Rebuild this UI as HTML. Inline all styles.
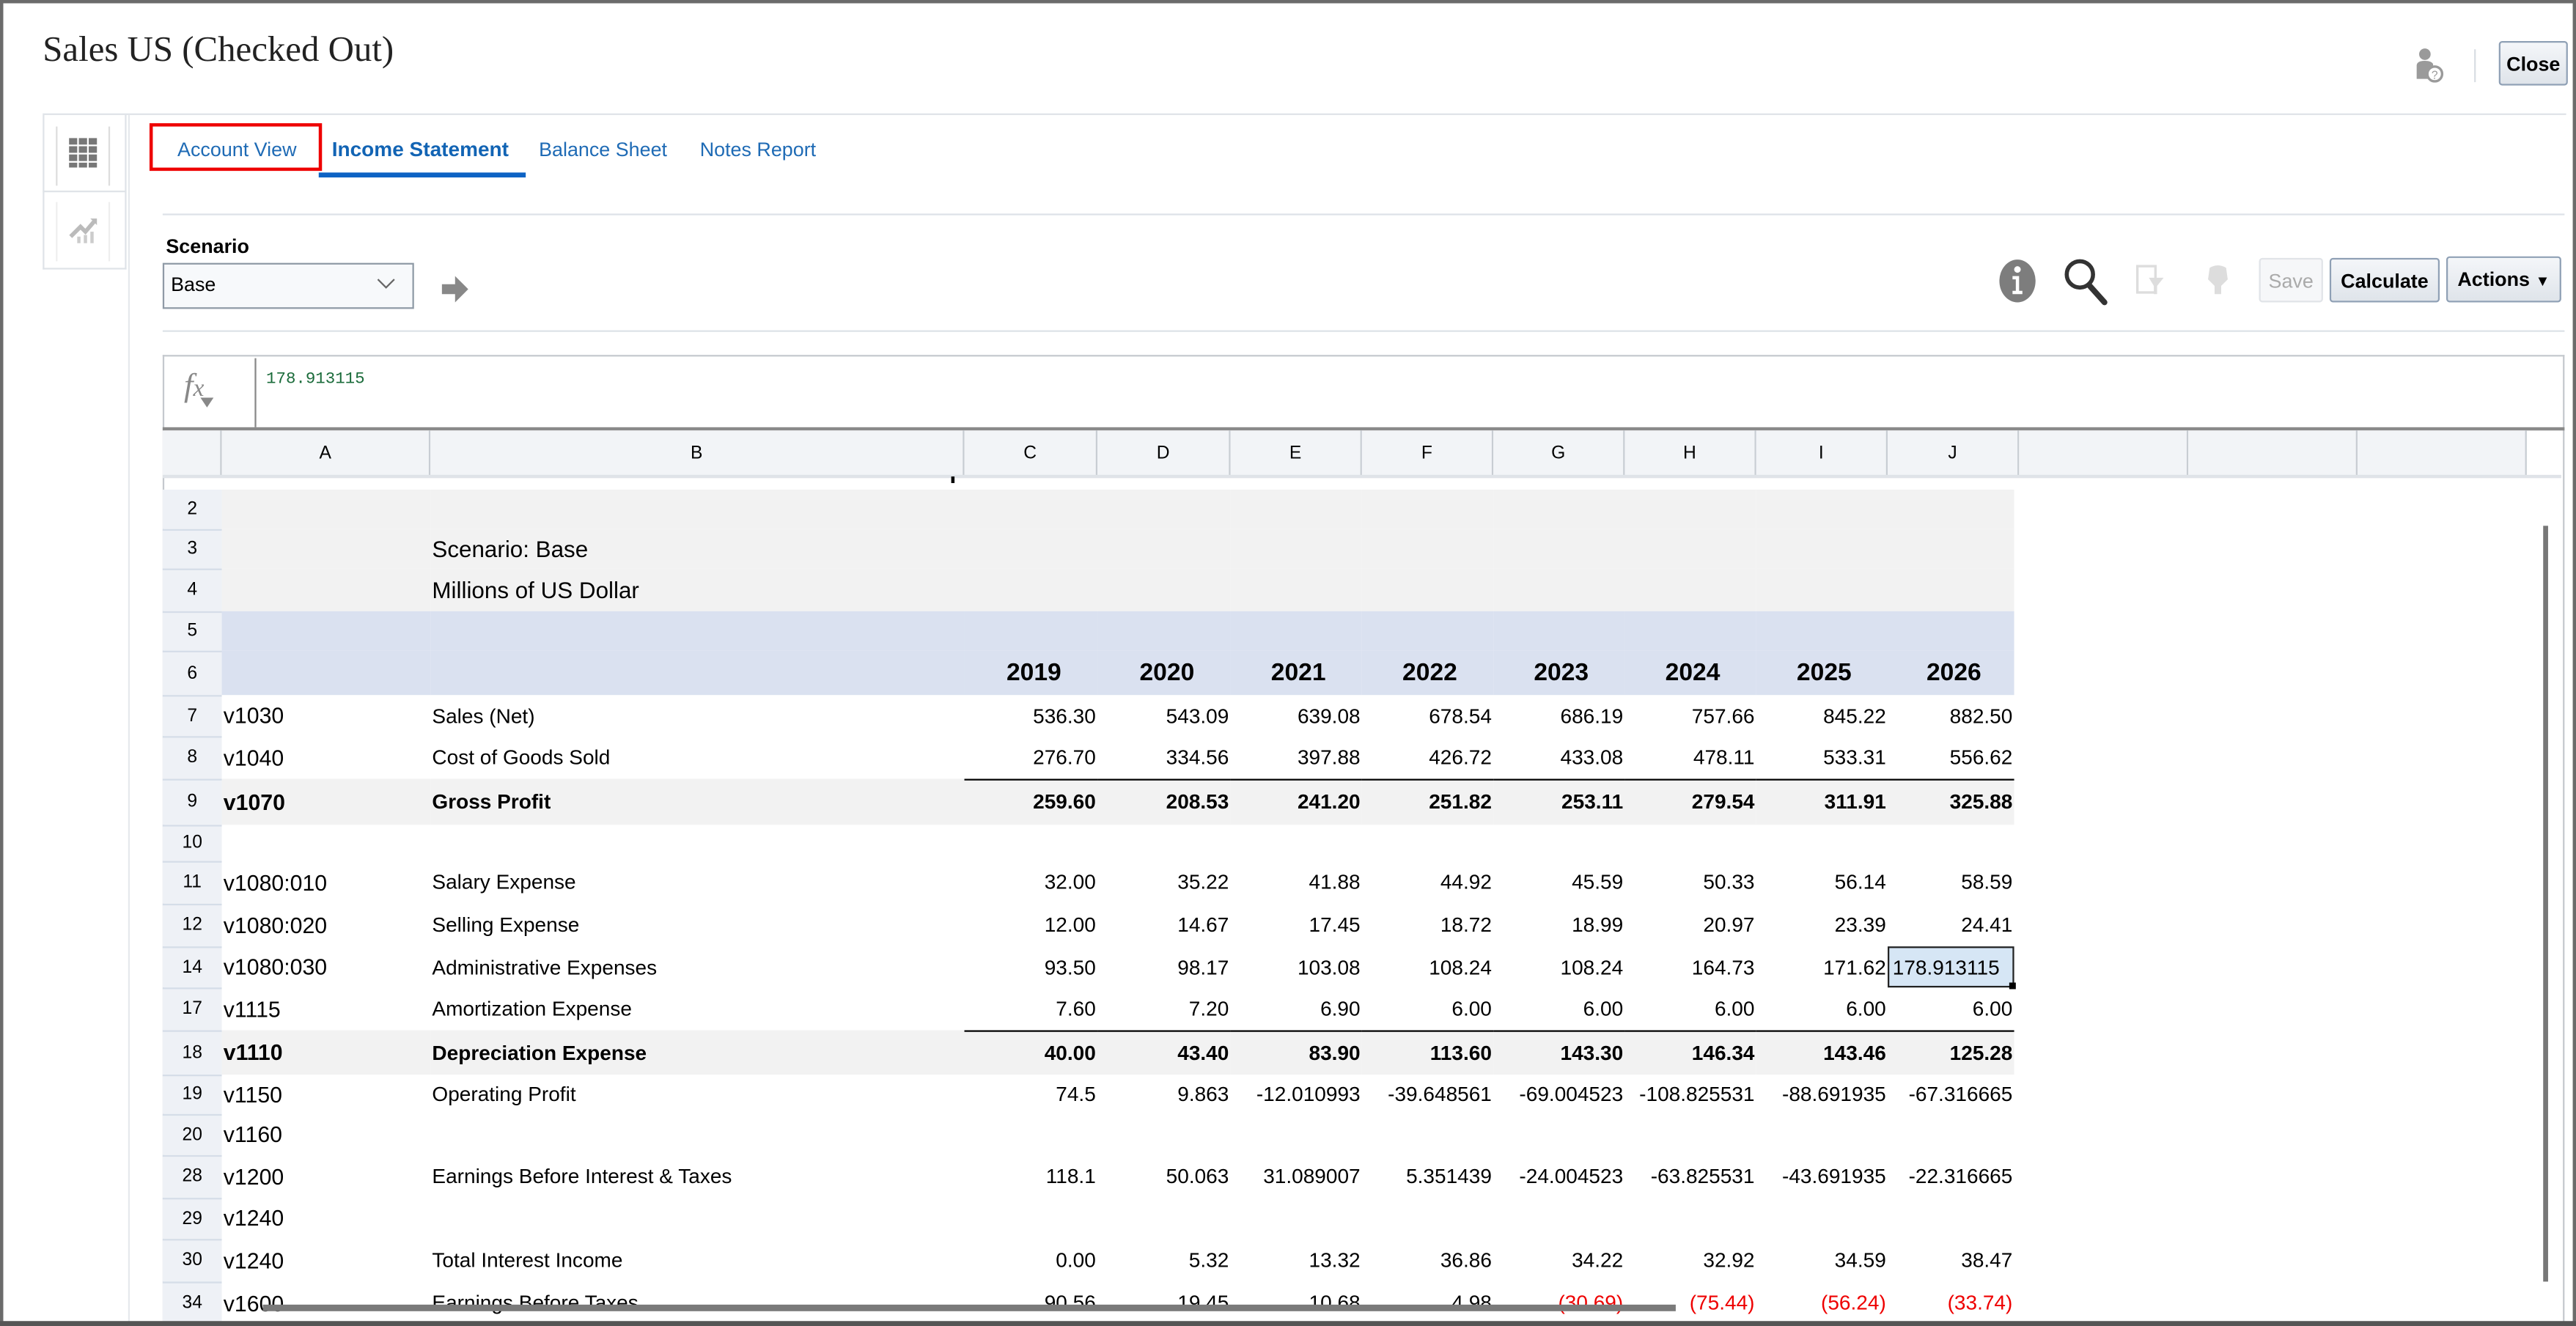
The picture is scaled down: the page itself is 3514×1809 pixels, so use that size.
<!DOCTYPE html>
<html><head><meta charset="utf-8"><style>
html,body{margin:0;padding:0;width:3514px;height:1809px;overflow:hidden;background:#fff}
#w{position:absolute;left:0;top:0;width:1568px;height:807px;transform:scale(2.2411,2.2416);transform-origin:0 0;font-family:"Liberation Sans",Arial,sans-serif;color:#000;background:#fff}
.a{position:absolute}
.frame{left:0;top:0;width:1564px;height:803px;border:2px solid #6b6b6b;border-right-width:3px}
.title{left:26px;top:18px;font-family:"Liberation Serif",serif;font-size:21.8px;color:#222}
.btn{border:1px solid #8fa0b5;border-radius:2px;background:linear-gradient(#f4f6f9,#dfe4ea);font-size:12px;font-weight:bold;text-align:center;box-sizing:border-box}
.tab{top:84px;font-size:12.5px;color:#1f6bb5}
table{border-collapse:collapse;table-layout:fixed}
td{padding:0 1px;font-size:12.5px;white-space:nowrap;overflow:visible}
td.n{text-align:right}
td.rn{background:#eef1f6;text-align:center;font-size:11px;border-bottom:1px solid #d5dde8}
tr.g td:not(.rn){background:#f2f2f2}
tr.b td:not(.rn){background:#dae1f0}
tr.bold td{font-weight:bold}
td.ul{border-bottom:1.5px solid #000}
.hdr{top:262px;height:28px;border-right:1px solid #c8cdd3;background:#f2f4f7;font-size:11px;text-align:center;line-height:28px;box-sizing:border-box}
</style></head><body><div id="w">
<div class="a frame"></div>
<div class="a title">Sales US (Checked Out)</div>
<svg class="a" style="left:1468px;top:28px" width="22" height="24" viewBox="0 0 22 24"><circle cx="8" cy="5" r="3.5" fill="#9a9a9a"/><path d="M3 20 V12 Q3 9 8 9 Q12 9 13 11 V20Z" fill="#9a9a9a"/><circle cx="14" cy="17" r="4.5" fill="#fff" stroke="#9a9a9a" stroke-width="1.5"/><text x="12" y="20" font-size="7" fill="#9a9a9a" font-family="Liberation Sans">?</text></svg>
<div class="a" style="left:1506px;top:30px;width:1px;height:20px;background:#d8dde3"></div>
<div class="a btn" style="left:1521px;top:25px;width:42px;height:27px;line-height:26px;font-size:12px">Close</div>
<div class="a" style="left:26px;top:69px;width:1536px;height:1px;background:#dfe3e8"></div>
<div class="a" style="left:26px;top:70px;width:51px;height:94px;border:1px solid #dfe3e8;border-top:none;box-sizing:border-box"></div>
<div class="a" style="left:26px;top:116px;width:51px;height:1px;background:#dfe3e8"></div>
<div class="a" style="left:78px;top:70px;width:1px;height:737px;background:#e6e9ed"></div>
<div class="a" style="left:34px;top:77px;width:33px;height:36px;border-left:1px solid #ddd;border-right:1px solid #ddd;box-sizing:border-box"></div>
<svg class="a" style="left:42px;top:84px" width="18" height="18" viewBox="0 0 18 18" fill="#777"><g><rect x="0" y="0" width="5" height="4"/><rect x="6" y="0" width="5" height="4"/><rect x="12" y="0" width="5" height="4"/><rect x="0" y="5" width="5" height="4"/><rect x="6" y="5" width="5" height="4"/><rect x="12" y="5" width="5" height="4"/><rect x="0" y="10" width="5" height="4"/><rect x="6" y="10" width="5" height="4"/><rect x="12" y="10" width="5" height="4"/><rect x="0" y="15" width="5" height="3"/><rect x="6" y="15" width="5" height="3"/><rect x="12" y="15" width="5" height="3"/></g></svg>
<div class="a" style="left:34px;top:123px;width:33px;height:36px;border-left:1px solid #eee;border-right:1px solid #eee;box-sizing:border-box"></div>
<svg class="a" style="left:41px;top:130px" width="20" height="20" viewBox="0 0 20 20"><path d="M2 14 L8 8 L11 11 L17 4" stroke="#bbb" stroke-width="2.5" fill="none"/><path d="M14 3 L18 3 L18 7Z" fill="#bbb"/><g fill="#ccc"><rect x="6" y="14" width="2" height="4"/><rect x="10" y="13" width="2" height="5"/><rect x="14" y="11" width="2" height="7"/></g></svg>
<div class="a" style="left:91px;top:75px;width:105px;height:29px;border:2px solid #e00;box-sizing:border-box"></div>
<div class="a tab" style="left:108px;font-size:12px">Account View</div>
<div class="a tab" style="left:202px;font-weight:bold;color:#1264b4">Income Statement</div>
<div class="a" style="left:194px;top:105px;width:126px;height:3px;background:#0d63c4"></div>
<div class="a tab" style="left:328px;font-size:12px">Balance Sheet</div>
<div class="a tab" style="left:426px;font-size:12px">Notes Report</div>
<div class="a" style="left:99px;top:130px;width:1462px;height:1px;background:#dde2e8"></div>
<div class="a" style="left:101px;top:143px;font-size:12px;font-weight:bold">Scenario</div>
<div class="a" style="left:99px;top:160px;width:153px;height:28px;border:1px solid #8f9aa6;background:#f7f9fb;box-sizing:border-box;font-size:12px;line-height:24px;padding-left:4px">Base</div>
<svg class="a" style="left:229px;top:169px" width="12" height="8" viewBox="0 0 12 8"><path d="M1 1 L6 6 L11 1" stroke="#666" fill="none"/></svg>
<svg class="a" style="left:268px;top:167px" width="18" height="18" viewBox="0 0 18 18"><path d="M1 6 H9 V1 L17 9 L9 17 V12 H1Z" fill="#888"/></svg>
<svg class="a" style="left:1216px;top:157px" width="24" height="28" viewBox="0 0 24 28"><ellipse cx="12" cy="14" rx="11" ry="13" fill="#7d7d7d"/><circle cx="12" cy="7" r="2" fill="#fff"/><path d="M9 11 H13 V20 H15 V22 H9 V20 H11 V13 H9Z" fill="#fff"/></svg>
<svg class="a" style="left:1255px;top:156px" width="30" height="32" viewBox="0 0 30 32"><circle cx="11" cy="11" r="8" stroke="#333" stroke-width="2.5" fill="none"/><path d="M17 18 L26 28" stroke="#333" stroke-width="3.5" stroke-linecap="round"/></svg>
<svg class="a" style="left:1299px;top:160px" width="20" height="22" viewBox="0 0 20 22"><rect x="2" y="2" width="11" height="16" fill="none" stroke="#ddd" stroke-width="1.5"/><path d="M9 9 H18 L14 14 V19 H12 V14Z" fill="#ddd"/></svg>
<svg class="a" style="left:1340px;top:160px" width="20" height="22" viewBox="0 0 20 22"><path d="M5 3 Q10 0 15 3 L16 10 L12 14 V19 H8 V14 L4 10Z" fill="#ddd"/></svg>
<div class="a btn" style="left:1375px;top:157px;width:39px;height:27px;line-height:26px;color:#aaa;font-weight:normal;background:#f6f7f9;border-color:#e1e4e8">Save</div>
<div class="a btn" style="left:1418px;top:157px;width:67px;height:27px;line-height:26px">Calculate</div>
<div class="a btn" style="left:1489px;top:156px;width:70px;height:28px;line-height:26px">Actions <span style="font-size:9px">▼</span></div>
<div class="a" style="left:99px;top:201px;width:1462px;height:1px;background:#dde2e8"></div>
<div class="a" style="left:99px;top:216px;width:1462px;height:591px;border:1px solid #c5c9ce;border-bottom:none;box-sizing:border-box"></div>
<div class="a" style="left:155px;top:218px;width:1px;height:42px;background:#888"></div>
<div class="a" style="left:112px;top:224px;font-family:'Liberation Serif',serif;font-style:italic;font-size:20px;color:#888">f<span style="font-size:15px">x</span></div>
<svg class="a" style="left:122px;top:242px" width="8" height="6"><path d="M0 0 H8 L4 6Z" fill="#888"/></svg>
<div class="a" style="left:162px;top:226px;font-family:'Liberation Mono',monospace;font-size:10px;color:#1a6b3a">178.913115</div>
<div class="a" style="left:99px;top:260px;width:1462px;height:2px;background:#8a8a8a"></div>
<div class="a hdr" style="left:99px;width:36px;background:#f2f4f7"></div>
<div class="a hdr" style="left:135px;width:127px">A</div>
<div class="a hdr" style="left:262px;width:325px">B</div>
<div class="a hdr" style="left:587px;width:81px">C</div>
<div class="a hdr" style="left:668px;width:81px">D</div>
<div class="a hdr" style="left:749px;width:80px">E</div>
<div class="a hdr" style="left:829px;width:80px">F</div>
<div class="a hdr" style="left:909px;width:80px">G</div>
<div class="a hdr" style="left:989px;width:80px">H</div>
<div class="a hdr" style="left:1069px;width:80px">I</div>
<div class="a hdr" style="left:1149px;width:80px">J</div>
<div class="a hdr" style="left:1229px;width:103px"></div>
<div class="a hdr" style="left:1332px;width:103px"></div>
<div class="a hdr" style="left:1435px;width:103px"></div>
<div class="a" style="left:99px;top:289px;width:1460px;height:2px;background:#dfe3e8"></div>
<div class="a" style="left:579px;top:290px;width:2px;height:4px;background:#000"></div>
<table class="a" style="left:99px;top:298px;width:1127px">
<colgroup><col style="width:36px"><col style="width:127px"><col style="width:325px"><col style="width:81px"><col style="width:81px"><col style="width:80px"><col style="width:80px"><col style="width:80px"><col style="width:80px"><col style="width:80px"><col style="width:77px"></colgroup>
<tr class="g" style="height:24px"><td class="rn">2</td><td></td><td></td><td></td><td></td><td></td><td></td><td></td><td></td><td></td><td></td></tr>
<tr class="g" style="height:24px"><td class="rn">3</td><td></td><td style="font-size:14px">Scenario: Base</td><td></td><td></td><td></td><td></td><td></td><td></td><td></td><td></td></tr>
<tr class="g" style="height:26px"><td class="rn">4</td><td></td><td style="font-size:14px">Millions of US Dollar</td><td></td><td></td><td></td><td></td><td></td><td></td><td></td><td></td></tr>
<tr class="b" style="height:24px"><td class="rn">5</td><td></td><td></td><td></td><td></td><td></td><td></td><td></td><td></td><td></td><td></td></tr>
<tr class="b bold" style="height:27px"><td class="rn" style="font-weight:normal">6</td><td></td><td></td><td class="n" style="font-size:15px;padding-right:22px">2019</td><td class="n" style="font-size:15px;padding-right:22px">2020</td><td class="n" style="font-size:15px;padding-right:22px">2021</td><td class="n" style="font-size:15px;padding-right:22px">2022</td><td class="n" style="font-size:15px;padding-right:22px">2023</td><td class="n" style="font-size:15px;padding-right:22px">2024</td><td class="n" style="font-size:15px;padding-right:22px">2025</td><td class="n" style="font-size:15px;padding-right:20px">2026</td></tr>
<tr style="height:25px"><td class="rn">7</td><td style="font-size:13.5px">v1030</td><td>Sales (Net)</td><td class="n">536.30</td><td class="n">543.09</td><td class="n">639.08</td><td class="n">678.54</td><td class="n">686.19</td><td class="n">757.66</td><td class="n">845.22</td><td class="n">882.50</td></tr>
<tr style="height:26px"><td class="rn">8</td><td style="font-size:13.5px">v1040</td><td>Cost of Goods Sold</td><td class="n ul">276.70</td><td class="n ul">334.56</td><td class="n ul">397.88</td><td class="n ul">426.72</td><td class="n ul">433.08</td><td class="n ul">478.11</td><td class="n ul">533.31</td><td class="n ul">556.62</td></tr>
<tr class="g bold" style="height:28px"><td class="rn" style="font-weight:normal">9</td><td style="font-size:13.5px">v1070</td><td>Gross Profit</td><td class="n">259.60</td><td class="n">208.53</td><td class="n">241.20</td><td class="n">251.82</td><td class="n">253.11</td><td class="n">279.54</td><td class="n">311.91</td><td class="n">325.88</td></tr>
<tr style="height:22px"><td class="rn">10</td><td></td><td></td><td></td><td></td><td></td><td></td><td></td><td></td><td></td><td></td></tr>
<tr style="height:26px"><td class="rn">11</td><td style="font-size:13.5px">v1080:010</td><td>Salary Expense</td><td class="n">32.00</td><td class="n">35.22</td><td class="n">41.88</td><td class="n">44.92</td><td class="n">45.59</td><td class="n">50.33</td><td class="n">56.14</td><td class="n">58.59</td></tr>
<tr style="height:26px"><td class="rn">12</td><td style="font-size:13.5px">v1080:020</td><td>Selling Expense</td><td class="n">12.00</td><td class="n">14.67</td><td class="n">17.45</td><td class="n">18.72</td><td class="n">18.99</td><td class="n">20.97</td><td class="n">23.39</td><td class="n">24.41</td></tr>
<tr style="height:25px"><td class="rn">14</td><td style="font-size:13.5px">v1080:030</td><td>Administrative Expenses</td><td class="n">93.50</td><td class="n">98.17</td><td class="n">103.08</td><td class="n">108.24</td><td class="n">108.24</td><td class="n">164.73</td><td class="n">171.62</td><td style="background:#d6e6f5;outline:1.5px solid #222;outline-offset:-1px;text-align:left;padding-left:3px">178.913115</td></tr>
<tr style="height:26px"><td class="rn">17</td><td style="font-size:13.5px">v1115</td><td>Amortization Expense</td><td class="n ul">7.60</td><td class="n ul">7.20</td><td class="n ul">6.90</td><td class="n ul">6.00</td><td class="n ul">6.00</td><td class="n ul">6.00</td><td class="n ul">6.00</td><td class="n ul">6.00</td></tr>
<tr class="g bold" style="height:27px"><td class="rn" style="font-weight:normal">18</td><td style="font-size:13.5px">v1110</td><td>Depreciation Expense</td><td class="n">40.00</td><td class="n">43.40</td><td class="n">83.90</td><td class="n">113.60</td><td class="n">143.30</td><td class="n">146.34</td><td class="n">143.46</td><td class="n">125.28</td></tr>
<tr style="height:24px"><td class="rn">19</td><td style="font-size:13.5px">v1150</td><td>Operating Profit</td><td class="n">74.5</td><td class="n">9.863</td><td class="n">-12.010993</td><td class="n">-39.648561</td><td class="n">-69.004523</td><td class="n">-108.825531</td><td class="n">-88.691935</td><td class="n">-67.316665</td></tr>
<tr style="height:25px"><td class="rn">20</td><td style="font-size:13.5px">v1160</td><td></td><td></td><td></td><td></td><td></td><td></td><td></td><td></td><td></td></tr>
<tr style="height:26px"><td class="rn">28</td><td style="font-size:13.5px">v1200</td><td>Earnings Before Interest &amp; Taxes</td><td class="n">118.1</td><td class="n">50.063</td><td class="n">31.089007</td><td class="n">5.351439</td><td class="n">-24.004523</td><td class="n">-63.825531</td><td class="n">-43.691935</td><td class="n">-22.316665</td></tr>
<tr style="height:25px"><td class="rn">29</td><td style="font-size:13.5px">v1240</td><td></td><td></td><td></td><td></td><td></td><td></td><td></td><td></td><td></td></tr>
<tr style="height:26px"><td class="rn">30</td><td style="font-size:13.5px">v1240</td><td>Total Interest Income</td><td class="n">0.00</td><td class="n">5.32</td><td class="n">13.32</td><td class="n">36.86</td><td class="n">34.22</td><td class="n">32.92</td><td class="n">34.59</td><td class="n">38.47</td></tr>
<tr style="height:26px"><td class="rn">34</td><td style="font-size:13.5px">v1600</td><td>Earnings Before Taxes</td><td class="n">90.56</td><td class="n">19.45</td><td class="n">10.68</td><td class="n">4.98</td><td class="n" style="color:#e00">(30.69)</td><td class="n" style="color:#e00">(75.44)</td><td class="n" style="color:#e00">(56.24)</td><td class="n" style="color:#e00">(33.74)</td></tr>
</table>
<div class="a" style="left:1223px;top:598px;width:4px;height:4px;background:#000"></div>
<div class="a" style="left:1548px;top:320px;width:3px;height:460px;background:#777"></div>
<div class="a" style="left:160px;top:794px;width:860px;height:4px;background:#7a7a7a"></div>
<div class="a" style="left:0;top:804px;width:1568px;height:3px;background:#555"></div>
</div></body></html>
